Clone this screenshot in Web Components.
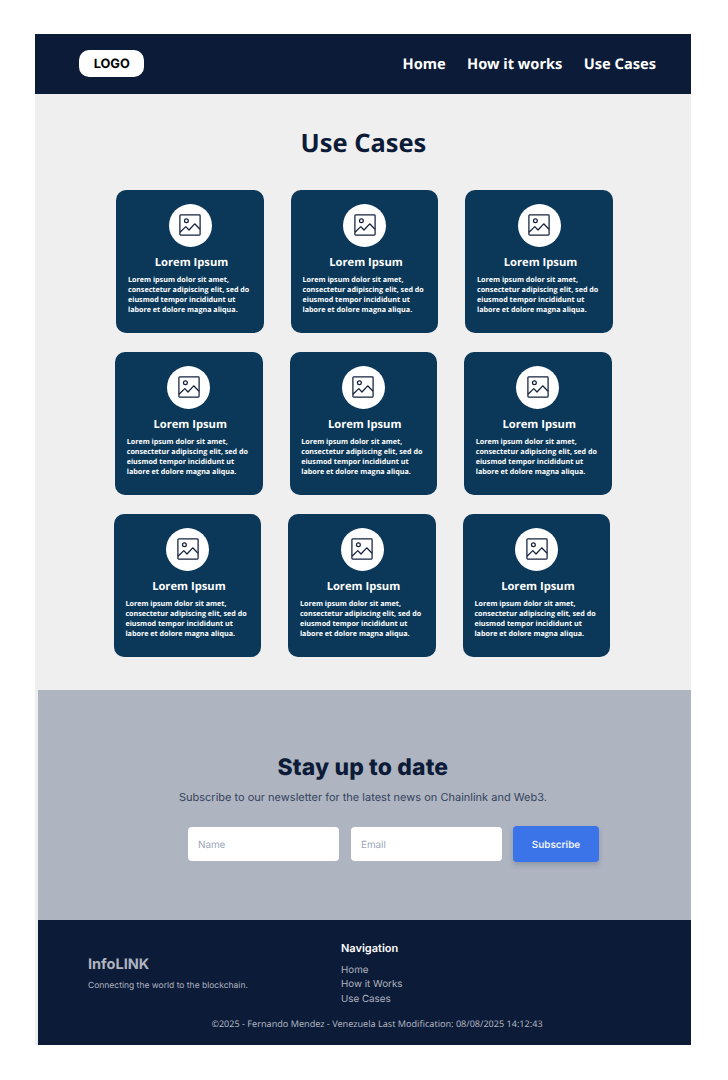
<!DOCTYPE html>
<html lang="en">
<head>
<meta charset="utf-8">
<title>InfoLINK – Use Cases</title>
<style>
body{margin:0;background:#fff;font-family:"Noto Sans",sans-serif;text-rendering:geometricPrecision}
</style>
</head>
<body>
<info-page>
  <site-header slot="header"></site-header>
  <use-cases></use-cases>
  <news-letter></news-letter>
  <site-footer></site-footer>
</info-page>
<script>
function define(name, html){
  const t=document.createElement('template');
  t.innerHTML=html;
  customElements.define(name, class extends HTMLElement{
    constructor(){
      super();
      this.attachShadow({mode:'open'}).append(t.content.cloneNode(true));
    }
  });
}
define('info-page', `<style>
:host{display:block;box-sizing:border-box;width:728px;height:1080px;padding:34px 37px 35px 35.4px;overflow:hidden}
main{background:#efefef;height:1011px}
</style><main><slot name="header"></slot><slot></slot></main>`);

define('site-header', `<style>
:host{display:flex;box-sizing:border-box;height:59.6px;background:#0c1b37;align-items:center;justify-content:space-between;padding:0 35px 0 43.6px}
.logo{box-sizing:border-box;width:65.5px;height:27px;border-radius:10px;background:#fff;color:#000;text-align:center;font:700 12.8px/29px Inter,sans-serif}
nav{display:flex;gap:21.3px;color:#fff;margin-top:0;font:700 14.6px/20px "Noto Sans",sans-serif}
</style><div class="logo">LOGO</div><nav><span>Home</span><span>How it works</span><span>Use Cases</span></nav>`);

define('use-card', `<style>
:host{display:block;box-sizing:border-box;width:147.5px;height:143px;border-radius:10px;background:#0b3858;color:#fff;padding:14px 0 0 11.5px}
.disc{width:43px;height:43px;border-radius:50%;background:#fff;margin-left:40.8px;display:flex;align-items:center;justify-content:center}
svg{display:block;width:22px;height:22px}
h3{margin:7px 0 0 -8px;width:143px;text-align:center;font:700 11.2px/18px "Open Sans",sans-serif}
p{margin:3px 0 0;font:700 7.18px/10px "Open Sans",sans-serif;white-space:nowrap}
</style><div class="disc"><svg viewBox="0 0 22 22" fill="none" stroke="#14213d" stroke-width="1.25" stroke-linejoin="round"><rect x=".9" y=".9" width="20.2" height="20.2" rx=".8"/><circle cx="7.4" cy="6.7" r="1.9"/><path d="M1 18.2L6.8 12.6L10 16L15.7 9.8L21 15.2"/></svg></div>
<h3><slot></slot></h3><p>Lorem ipsum dolor sit amet,<br>consectetur adipiscing elit, sed do<br>eiusmod tempor incididunt ut<br>labore et dolore magna aliqua.</p>`);

define('card-row', `<style>:host{display:flex;gap:27px}</style><use-card>Lorem Ipsum</use-card><use-card>Lorem Ipsum</use-card><use-card>Lorem Ipsum</use-card>`);

define('use-cases', `<style>
:host{display:block;box-sizing:border-box;height:596.4px;padding-top:30.4px;color:#0c1b37}
h1{margin:0;width:656px;text-align:center;font:700 25.4px/38px "Noto Sans",sans-serif}
.rows{display:flex;flex-direction:column;gap:19px;margin-top:28px}
card-row{margin-left:81.1px}
card-row:nth-child(2){margin-left:79.8px}
card-row:nth-child(3){margin-left:78.5px}
</style><h1>Use Cases</h1><div class="rows"><card-row></card-row><card-row></card-row><card-row></card-row></div>`);

define('news-letter', `<style>
:host{display:block;box-sizing:border-box;height:230px;margin-left:2.6px;padding-top:60px;background:#aeb4c0}
h2{margin:0 0 0 239.5px;color:#0c1b37;font:800 22.9px/34px Inter,sans-serif;letter-spacing:.16px;white-space:nowrap}
p{margin:5px 0 0 141px;color:#34435c;font:400 11px/17px Inter,sans-serif;white-space:nowrap}
form{display:flex;align-items:center;gap:12px;margin:20px 0 0 150px;height:36px}
.field{box-sizing:border-box;width:151px;height:34px;border-radius:4px;background:#fff;padding-left:10px;color:#9ba5b8;font:400 9.9px/36px Inter,sans-serif}
.button{width:86px;height:36px;margin-left:-1px;border-radius:4px;background:#3b74e9;color:#eef2fc;text-align:center;font:600 9.9px/38px Inter,sans-serif;box-shadow:0 3px 5px rgba(50,65,95,.25)}
</style><h2>Stay up to date</h2><p>Subscribe to our newsletter for the latest news on Chainlink and Web3.</p>
<form><div class="field">Name</div><div class="field">Email</div><div class="button">Subscribe</div></form>`);

define('site-footer', `<style>
:host{display:block;box-sizing:border-box;height:125px;margin-left:2.6px;background:#0c1b37;color:#aeb4c0;padding-top:19px}
.top{display:flex;height:75px}
.brand{width:253px;padding:14px 0 0 50px;box-sizing:border-box}
.name{font:700 14.5px/24px Inter,sans-serif}
.tag{font:400 8.5px/14px Inter,sans-serif;margin-top:2px;white-space:nowrap}
.links{display:flex;flex-direction:column;font:400 9.8px/14.7px Inter,sans-serif;padding-left:50px}
b{color:#fff;font:600 11px/18px Inter,sans-serif;margin-bottom:6.6px}
.copy{padding-left:173.4px;margin-top:2px;font:400 9.08px/14px "Noto Sans",sans-serif;white-space:nowrap;padding-top:1px}
</style><div class="top"><div class="brand"><div class="name">InfoLINK</div><div class="tag">Connecting the world to the blockchain.</div></div>
<div class="links"><b>Navigation</b><span>Home</span><span>How it Works</span><span>Use Cases</span></div></div>
<div class="copy">©2025 - Fernando Mendez - Venezuela Last Modification: 08/08/2025 14:12:43</div>`);
</script>
</body>
</html>
